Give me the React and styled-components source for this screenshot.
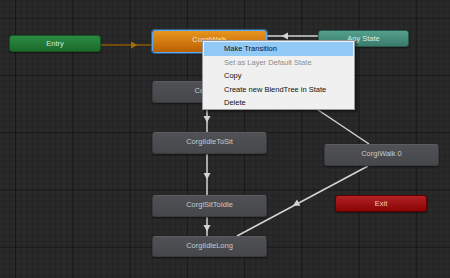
import React from "react";
import styled, { createGlobalStyle, css } from "styled-components";

const GlobalStyle = createGlobalStyle`
  html, body { margin: 0; padding: 0; background: #282828; }
  body { font-family: "Liberation Sans", Arial, sans-serif; }
`;

const Canvas = styled.div`
  position: relative;
  width: 450px;
  height: 278px;
  overflow: hidden;
  background-color: #292929;
  background-image:
    linear-gradient(to right, rgba(0,0,0,0.32) 1px, transparent 1px),
    linear-gradient(to bottom, rgba(0,0,0,0.32) 1px, transparent 1px),
    linear-gradient(to right, rgba(0,0,0,0.13) 1px, transparent 1px),
    linear-gradient(to bottom, rgba(0,0,0,0.13) 1px, transparent 1px);
  background-size: 57.3px 57.3px, 57.3px 57.3px, 5.73px 5.73px, 5.73px 5.73px;
  background-position: 15px 17.7px, 15px 17.7px, 15px 17.7px, 15px 17.7px;
`;

const Wires = styled.svg`
  position: absolute;
  inset: 0;
  width: 450px;
  height: 278px;
  pointer-events: none;
`;

const variants = {
  entry: css`
    background: linear-gradient(#2b8c40, #1b6a2d);
    border: 1px solid #155224;
    color: #d6e6d6;
    line-height: 15px;
  `,
  exit: css`
    background: linear-gradient(#b22222, #8a0505);
    border: 1px solid #5e0000;
    color: #f0d0d0;
    line-height: 15px;
  `,
  any: css`
    background: linear-gradient(#55a08e, #3a7a6b);
    border: 1px solid #2a5a4e;
    color: #d8ece6;
    line-height: 15px;
  `,
  selected: css`
    background: linear-gradient(#e8951f, #bb5f00);
    border: 1px solid #5aa8f0;
    box-shadow: 0 0 0 1px rgba(70, 150, 230, 0.55), 0 1px 2px rgba(0,0,0,0.5);
    color: #f4e4cc;
    line-height: 17px;
  `,
  state: css`
    background: linear-gradient(#505154, #46474a);
    border: 1px solid #3a3b3d;
    border-top-color: #5c5d60;
    color: #cacaca;
    line-height: 17px;
  `,
};

const Node = styled.div`
  position: absolute;
  left: ${(p) => p.$x}px;
  top: ${(p) => p.$y}px;
  width: ${(p) => p.$w}px;
  height: ${(p) => p.$h}px;
  box-sizing: border-box;
  border-radius: 3px;
  box-shadow: 0 1px 2px rgba(0,0,0,0.5);
  font-size: 7.5px;
  text-align: center;
  white-space: nowrap;
  overflow: hidden;
  ${(p) => variants[p.$kind]}
`;

const Menu = styled.ul`
  position: absolute;
  left: 202px;
  top: 40px;
  width: 153px;
  height: 70px;
  box-sizing: border-box;
  margin: 0;
  padding: 1px 1px;
  list-style: none;
  background: #f0f0f0;
  border: 1px solid #9a9a9a;
  box-shadow: 2px 2px 2px rgba(0,0,0,0.45);
  font-family: "Liberation Sans", Arial, sans-serif;
  font-size: 7.5px;
`;

const MenuItem = styled.li`
  height: 13.5px;
  line-height: 13.5px;
  padding-left: 20px;
  color: ${(p) => (p.$disabled ? "#8c8c8c" : "#111111")};
  background: ${(p) => (p.$active ? "#91c9f7" : "transparent")};
  white-space: nowrap;
`;

const nodes = [
  { label: "Entry", kind: "entry", x: 9, y: 35, w: 92, h: 17 },
  { label: "CorgiWalk", kind: "selected", x: 152, y: 30, w: 115, h: 23 },
  { label: "Any State", kind: "any", x: 318, y: 30, w: 91, h: 17 },
  { label: "CorgiIdle", kind: "state", x: 152, y: 81, w: 115, h: 22 },
  { label: "CorgiIdleToSit", kind: "state", x: 152, y: 132, w: 115, h: 22 },
  { label: "CorgiWalk 0", kind: "state", x: 324, y: 144, w: 115, h: 22 },
  { label: "CorgiSitToIdle", kind: "state", x: 152, y: 195, w: 115, h: 22 },
  { label: "Exit", kind: "exit", x: 335, y: 195, w: 92, h: 17 },
  { label: "CorgiIdleLong", kind: "state", x: 152, y: 236, w: 115, h: 21 },
];

const menuItems = [
  { label: "Make Transition", active: true },
  { label: "Set as Layer Default State", disabled: true },
  { label: "Copy" },
  { label: "Create new BlendTree in State" },
  { label: "Delete" },
];

function Arrow({ x, y, angle, color }) {
  return (
    <polygon
      points="3.5,0 -3,-3.5 -3,3.5"
      fill={color}
      transform={`translate(${x} ${y}) rotate(${angle})`}
    />
  );
}

export default function App() {
  const white = "#d4d4d4";
  const diagAngle = (Math.atan2(236 - 166, 237 - 368) * 180) / Math.PI;
  return (
    <>
      <GlobalStyle />
      <Canvas>
        <Wires viewBox="0 0 450 278">
          <line x1="101" y1="45" x2="152" y2="45" stroke="#8a5a05" strokeWidth="1.5" />
          <Arrow x={134} y={45} angle={0} color="#a56b05" />
          <line x1="267" y1="36" x2="318" y2="36" stroke={white} strokeWidth="1.5" />
          <Arrow x={285} y={36} angle={180} color={white} />
          <line x1="207" y1="103" x2="207" y2="132" stroke={white} strokeWidth="1.5" />
          <Arrow x={207} y={119} angle={90} color={white} />
          <line x1="207" y1="154" x2="207" y2="195" stroke={white} strokeWidth="1.5" />
          <Arrow x={207} y={176} angle={90} color={white} />
          <line x1="207" y1="217" x2="207" y2="236" stroke={white} strokeWidth="1.5" />
          <Arrow x={207} y={228} angle={90} color={white} />
          <line x1="368" y1="166" x2="237" y2="236" stroke={white} strokeWidth="1.5" />
          <Arrow x={296} y={204} angle={diagAngle} color={white} />
          <line x1="233" y1="53" x2="369" y2="144" stroke={white} strokeWidth="1.5" />
        </Wires>
        {nodes.map((n) => (
          <Node key={n.label} $kind={n.kind} $x={n.x} $y={n.y} $w={n.w} $h={n.h}>
            {n.label}
          </Node>
        ))}
        <Menu>
          {menuItems.map((m) => (
            <MenuItem key={m.label} $active={m.active} $disabled={m.disabled}>
              {m.label}
            </MenuItem>
          ))}
        </Menu>
      </Canvas>
    </>
  );
}
